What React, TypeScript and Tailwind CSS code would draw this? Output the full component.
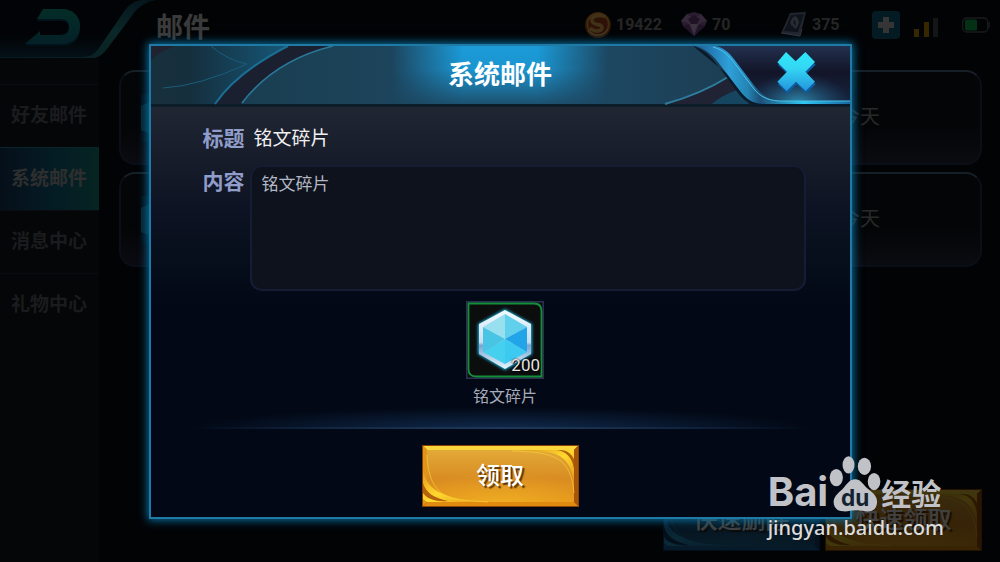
import React from 'react';

type Tone = 'gold' | 'blue';

interface ActionButtonProps {
  label: string;
  tone: Tone;
}

const tabs = ['好友邮件', '系统邮件', '消息中心', '礼物中心'];
const activeTab = '系统邮件';

// Bevel and fill colours of the big action buttons
const tones = {
  gold: { edge: '#8a4306', top: '#fbd53c', left: '#e0951a', right: '#a85508', bottom: '#e08a10', from: '#e2aa38', mid: '#d98c22', to: '#e8981c', swoosh: '#ffd92e', shade: '#b4620c' },
  blue: { edge: '#0a3a68', top: '#2f8fc0', left: '#1c6ea8', right: '#124a80', bottom: '#1a68a8', from: '#1d5c84', mid: '#184c74', to: '#1c6090', swoosh: '#2aa0d8', shade: '#0f3c66' },
};

const ActionButton: React.FC<ActionButtonProps> = ({ label, tone }) => {
  const c = tones[tone];
  return (
    <button type="button" className="relative h-[62px] w-[157px] pb-1 text-2xl font-medium text-white">
      <svg className="absolute inset-0 h-full w-full" viewBox="0 0 157 62" aria-hidden="true">
        <defs>
          <linearGradient id={`${tone}-fill`} x1="0" y1="0" x2="0" y2="1">
            <stop offset="0" stopColor={c.from} />
            <stop offset="0.55" stopColor={c.mid} />
            <stop offset="1" stopColor={c.to} />
          </linearGradient>
          <linearGradient id={`${tone}-swoosh`} x1="0" y1="0" x2="1" y2="1">
            <stop offset="0" stopColor={c.left} />
            <stop offset="0.5" stopColor={c.swoosh} />
            <stop offset="1" stopColor={c.left} />
          </linearGradient>
          <radialGradient id={`${tone}-warm`} cx="0.5" cy="1" r="0.6">
            <stop offset="0" stopColor={c.swoosh} stopOpacity="0.3" />
            <stop offset="1" stopColor={c.swoosh} stopOpacity="0" />
          </radialGradient>
        </defs>
        <rect width="157" height="62" fill={c.edge} />
        <path d="M1 1H156L152 5H5Z" fill={c.top} />
        <path d="M1 1L5 5V57L1 61Z" fill={c.left} />
        <path d="M156 1V61L152 57V5Z" fill={c.right} />
        <path d="M1 61L5 57H152L156 61Z" fill={c.bottom} />
        <rect x="5" y="5" width="147" height="52" fill={`url(#${tone}-fill)`} />
        <rect x="5" y="5" width="147" height="52" fill={`url(#${tone}-warm)`} />
        <path d="M1 24C4 42 14 53 62 57H5L1 54Z" fill={`url(#${tone}-swoosh)`} />
        <path d="M1 38C4 48 12 53 26 56C14 57 5 54 1 48Z" fill={c.shade} />
        <path d="M5 57V53C9 55 14 56 20 57Z" fill={c.swoosh} />
        <path d="M5 10C6 32 12 52 38 55L66 57" fill="none" stroke={c.top} strokeWidth="0.6" />
        <path d="M96 5H152V38C150 22 144 9 124 7Z" fill={`url(#${tone}-swoosh)`} />
        <path d="M134 5C144 6 150 12 152 24V14C149 8 144 5 138 5Z" fill={c.shade} />
        <path d="M90 6C132 7 149 12 152 48" fill="none" stroke={c.top} strokeWidth="0.6" />
      </svg>
      <span className="relative [text-shadow:2px_2px_1px_rgba(60,30,0,0.8)]">{label}</span>
    </button>
  );
};

const BackFrame = () => (
  <svg className="h-full w-full" viewBox="0 0 156 60" aria-hidden="true">
    <defs>
      <linearGradient id="frame" x1="0" y1="1" x2="1" y2="0">
        <stop offset="0" stopColor="#1c6a86" />
        <stop offset="0.6" stopColor="#2c9c9c" />
        <stop offset="1" stopColor="#144c6c" />
      </linearGradient>
      <linearGradient id="frame-glow" x1="0" y1="0" x2="0" y2="1">
        <stop offset="0.6" stopColor="#0a0e18" />
        <stop offset="1" stopColor="#124258" />
      </linearGradient>
      <linearGradient id="arrow" x1="0" y1="0" x2="0" y2="1">
        <stop offset="0" stopColor="#12b49c" />
        <stop offset="1" stopColor="#10809c" />
      </linearGradient>
    </defs>
    <path d="M0 0H148C138 2 131 7 124 18L103 47C98 54 94 57 84 57H0Z" fill="url(#frame-glow)" />
    <path d="M0 57H80C90 57 94 55 99 48L121 16C127 6 133 1 142 0H156C144 2 137 8 131 17L107 49C101 57 95 59 86 59H0Z" fill="url(#frame)" />
    <path d="M43 11H62C74 11 80 19 80 28C80 39 73 46 62 46H25L40 33V37H60C66 37 69 34 69 29C69 23 66 21 60 21H37Z" fill="#0a4a70" />
    <path d="M43 9H62C74 9 80 17 80 26C80 37 73 44 62 44H25L40 31V35H60C66 35 69 32 69 27C69 21 66 19 60 19H37Z" fill="url(#arrow)" />
  </svg>
);

const CoinIcon = () => (
  <svg className="h-7 w-7 shrink-0" viewBox="0 0 28 28" aria-hidden="true">
    <circle cx="14" cy="14" r="13" fill="#b85a14" />
    <circle cx="14" cy="13" r="11.5" fill="#ffb040" />
    <circle cx="14" cy="13.5" r="9.8" fill="#b84820" />
    <path d="M21 6C16 3 7 5 8 10C9 15 19 12 18 17C17 21 10 21 6 17" fill="none" stroke="#ffc860" strokeWidth="3.4" />
    <path d="M4 19C8 26 20 26 24 18" fill="none" stroke="#ffd880" strokeWidth="1.4" />
  </svg>
);

const GemIcon = () => (
  <svg className="h-7 w-7 shrink-0" viewBox="0 0 28 28" aria-hidden="true">
    <path d="M7 3L14 1L21 3L27 10L25 15L14 25L3 15L1 10Z" fill="#a070b8" />
    <path d="M7 3L14 8L21 3L27 10L20 12L14 25L8 12L1 10Z" fill="#d0a4e4" />
    <path d="M8 8L14 4L20 8L17 13H11Z" fill="#7c4c94" />
    <path d="M3 15L9 13L14 25Z" fill="#804c9c" />
    <path d="M25 15L19 13L14 25Z" fill="#804c9c" />
    <path d="M11 13H17L14 22Z" fill="#ecd0ff" />
  </svg>
);

const CardIcon = () => (
  <svg className="h-7 w-8 shrink-0" viewBox="0 0 32 28" aria-hidden="true">
    <path d="M14 2L30 1L24 25L5 22L7 18Z" fill="#8494b4" />
    <path d="M15 4L28 3L22 21L8 20Z" fill="#3c4c6c" />
    <path d="M19 5C24 8 24 14 19 18L17 15C13 14 14 8 19 5Z" fill="#a0b0cc" />
    <path d="M19 8L20 15L17 12Z" fill="#3c4c6c" />
    <path d="M5 22L24 25L26 18" fill="none" stroke="#c4d0e4" strokeWidth="1" />
  </svg>
);

const SignalIcon = () => (
  <svg className="h-6 w-7" viewBox="0 0 28 24" aria-hidden="true">
    <rect x="2" y="16" width="5" height="8" fill="#d89c00" />
    <rect x="12" y="9" width="5" height="15" fill="#d89c00" />
    <rect x="21" y="5" width="5" height="19" fill="#50545c" />
  </svg>
);

const BatteryIcon = () => (
  <svg className="h-4 w-7" viewBox="0 0 28 16" aria-hidden="true">
    <rect x="0.7" y="1" width="25" height="14" rx="4" fill="none" stroke="#646a70" strokeWidth="1.3" />
    <rect x="3" y="2.500" width="12" height="11" rx="1.500" fill="#10c058" />
    <path d="M27 5V11" stroke="#646a70" strokeWidth="1.5" />
  </svg>
);

const Currency: React.FC<{ icon: React.ReactNode; amount: string }> = ({ icon, amount }) => (
  <div className="flex w-24 items-center gap-1 font-[Roboto,sans-serif] text-base font-bold text-[#949494]">
    {icon}
    <span>{amount}</span>
  </div>
);

const MailCard = () => (
  <li className="relative flex h-[95px] items-center justify-between overflow-hidden rounded-2xl border-2 border-[#28385a] border-t-[#5a7c98] bg-linear-to-b from-[#12161c] from-60% to-[#2c2e46] pr-[100px] pl-5">
    <svg className="h-12 w-12" viewBox="0 0 48 48" aria-hidden="true">
      <rect width="48" height="48" fill="#0c3a54" />
      <path d="M0 12L24 0L10 24L20 44L0 36Z" fill="#1890b8" />
    </svg>
    <span className="pb-1 text-xl text-[#a0a0a0]">今天</span>
  </li>
);

// Painted strip behind the dialog title
const HeaderArt = () => (
  <svg className="absolute inset-0 h-full w-full" viewBox="0 0 699 61" preserveAspectRatio="none" aria-hidden="true">
    <defs>
      <linearGradient id="wing">
        <stop offset="0" stopColor="#18303c" />
        <stop offset="0.3" stopColor="#152f3e" />
        <stop offset="1" stopColor="#165878" />
      </linearGradient>
      <linearGradient id="panel">
        <stop offset="0" stopColor="#1a3e50" />
        <stop offset="0.4" stopColor="#1d4660" />
        <stop offset="0.75" stopColor="#1d4660" />
        <stop offset="1" stopColor="#1c3c50" />
      </linearGradient>
      <linearGradient id="lamp">
        <stop offset="0" stopColor="#1b9bd8" stopOpacity="0" />
        <stop offset="0.33" stopColor="#1b9bd8" />
        <stop offset="0.67" stopColor="#1b9bd8" />
        <stop offset="1" stopColor="#1b9bd8" stopOpacity="0" />
      </linearGradient>
      <linearGradient id="lamp-fade" x1="0" y1="0" x2="0" y2="1">
        <stop offset="0" stopColor="#fff" />
        <stop offset="0.4" stopColor="#eee" />
        <stop offset="1" stopColor="#222" />
      </linearGradient>
      <mask id="lamp-mask">
        <rect x="240" width="218" height="58" fill="url(#lamp-fade)" />
      </mask>
      <linearGradient id="corner" x1="0" y1="0" x2="0" y2="1">
        <stop offset="0" stopColor="#22304f" />
        <stop offset="0.45" stopColor="#131528" />
        <stop offset="1" stopColor="#162440" />
      </linearGradient>
      <radialGradient id="corner-glow" cx="0.5" cy="1" r="0.5" gradientTransform="translate(0 -0.6) scale(1 1.6)">
        <stop offset="0" stopColor="#3cc8f0" stopOpacity="0.6" />
        <stop offset="1" stopColor="#2a80b0" stopOpacity="0" />
      </radialGradient>
      <linearGradient id="ribbon" x1="0" y1="0" x2="1" y2="0">
        <stop offset="0" stopColor="#1c5c98" />
        <stop offset="0.22" stopColor="#2ea0d8" />
        <stop offset="0.34" stopColor="#2484b4" />
        <stop offset="0.42" stopColor="#1c5078" />
        <stop offset="0.7" stopColor="#30c8f4" />
        <stop offset="1" stopColor="#1864a0" />
      </linearGradient>
    </defs>
    <rect width="699" height="61" fill="#0c1d28" />
    <rect width="699" height="58" fill="#1b2030" />
    <path d="M0 0H137Q86 26 63 58H0Z" fill="url(#wing)" />
    <path d="M0 0H24Q8 6 0 14Z" fill="#20222f" />
    <path d="M60 0Q76 14 96 18Q48 40 12 42" fill="none" stroke="#1a5c7a" strokeWidth="1" />
    <path d="M137 0Q86 26 64 58" fill="none" stroke="#1a6e94" strokeWidth="2" />
    <path d="M182 0H560L598 58H90Q124 14 182 0Z" fill="url(#panel)" />
    <path d="M182 0Q124 14 91 57" fill="none" stroke="#2a7898" strokeWidth="1.6" />
    <rect x="240" width="218" height="58" fill="url(#lamp)" mask="url(#lamp-mask)" />
    <path d="M515 58Q552 48 578 31L586 44Q570 50 561 58Z" fill="#1f2334" />
    <path d="M561 58Q570 50 586 44L598 58Z" fill="#164560" />
    <path d="M514 58Q550 48 577 31" fill="none" stroke="#2c7e9c" strokeWidth="2" />
    <path d="M542 0C555 3 563 14 571 25L587 47C594 56 601 60 614 60H699V57H612Z" fill="#0a1a2c" />
    <path d="M555 0H699V57H612Q600 52 590 38Z" fill="url(#corner)" />
    <rect x="595" y="20" width="104" height="36" fill="url(#corner-glow)" />
    <path d="M544 0C557 3 565 13 573 24L589 45C596 54 602 58 615 58H699V55H628C618 55 610 48 602 38L583 13C577 5 571 1 564 0Z" fill="url(#ribbon)" />
    <path d="M562 1C573 4 578 10 584 18L603 43C609 50 615 54 628 55H699" fill="none" stroke="#48c4e8" strokeWidth="1" />
  </svg>
);

const CloseIcon = () => (
  <svg className="h-11 w-10" viewBox="48 27 120 132" aria-hidden="true">
    <defs>
      <linearGradient id="cross" x1="0" y1="0" x2="0" y2="1">
        <stop offset="0" stopColor="#2ee6fa" />
        <stop offset="0.4" stopColor="#34d8f4" />
        <stop offset="1" stopColor="#2494dc" />
      </linearGradient>
    </defs>
    <path transform="translate(2 8)" d="M78 33L107 61L136 33L165 63L136 92L165 122L137 150L108 122L80 150L52 122L81 92L52 64Z" fill="#0c5ca0" />
    <path d="M78 33L107 61L136 33L165 63L136 92L165 122L137 150L108 122L80 150L52 122L81 92L52 64Z" fill="url(#cross)" />
  </svg>
);

const ShardIcon = () => (
  <svg className="absolute inset-0 h-full w-full" viewBox="0 0 78 78" aria-hidden="true">
    <defs>
      <linearGradient id="rim" x1="0" y1="0" x2="0" y2="1">
        <stop offset="0" stopColor="#f4fcff" />
        <stop offset="0.55" stopColor="#c8dcf0" />
        <stop offset="0.6" stopColor="#7ca4d0" />
        <stop offset="1" stopColor="#e8f8ff" />
      </linearGradient>
      <filter id="halo" x="-30%" y="-30%" width="160%" height="160%">
        <feGaussianBlur stdDeviation="1.6" />
      </filter>
    </defs>
    <rect width="78" height="78" fill="#2a3050" />
    <rect x="1.500" y="1.500" width="75" height="75" fill="#0c0e0e" />
    <path d="M2.500 2.500H68Q75.500 2.500 75.500 10V75.500H10Q2.500 75.500 2.500 68Z" fill="none" stroke="#14903c" strokeWidth="1.8" />
    <path d="M39 8L66 23V53L39 69L12 53V23Z" fill="#18b8e0" filter="url(#halo)" />
    <path d="M39 9L65 23V53L39 68L13 53V23Z" fill="url(#rim)" />
    <path d="M39 13V38L17 26Z" fill="#98e0f0" />
    <path d="M39 13V38L61 26Z" fill="#60d0ec" />
    <path d="M61 26V51L39 38Z" fill="#22a4e8" />
    <path d="M61 51L39 63V38Z" fill="#3ccaf0" />
    <path d="M39 63L17 51L39 38Z" fill="#44d0ee" />
    <path d="M17 51V26L39 38Z" fill="#48c4e4" />
  </svg>
);

const PawLogo = () => (
  <svg className="h-[57px] w-[53px]" viewBox="0 0 160 172" role="img" aria-label="du">
    <g fill="#c0c2c8">
      <ellipse cx="25" cy="68" rx="20" ry="26" />
      <ellipse cx="62" cy="30" rx="18" ry="26" />
      <ellipse cx="110" cy="34" rx="20" ry="26" />
      <ellipse cx="139" cy="80" rx="19" ry="26" />
      <path d="M82 73C98 73 104 86 116 98C130 110 150 122 148 144C146 168 128 172 112 170C100 168 92 167 82 167C70 167 60 171 46 170C28 170 16 158 17 140C18 122 36 112 48 98C58 86 66 73 82 73Z" />
    </g>
    <text x="82" y="154" textAnchor="middle" fontSize="68" fontWeight="700" fontFamily="Inter, sans-serif" fill="#142230">du</text>
  </svg>
);

const Watermark = () => (
  <div className="pointer-events-none absolute right-14 bottom-[18px] flex flex-col text-[#c0c2c8]">
    <div className="flex h-[57px] items-end">
      <span className="font-[Inter,sans-serif] text-[40px] leading-10 font-bold">Bai</span>
      <PawLogo />
      <span className="pb-1 text-3xl leading-8 font-bold">经验</span>
    </div>
    <span className="font-['Noto_Sans',sans-serif] text-xl leading-8 font-medium text-[#dcdcdc]">jingyan.baidu.com</span>
  </div>
);

const MailDialog = () => (
  <section
    role="dialog"
    aria-labelledby="dialog-title"
    className="w-[70.300%] border-2 border-[#1f7aa6] bg-[#020815] shadow-[0_0_9px_1px_#0878ac]"
  >
    <header className="relative h-[61px]">
      <HeaderArt />
      <h2 id="dialog-title" className="relative text-center text-[26px] leading-[54px] font-bold text-white">系统邮件</h2>
      <button type="button" aria-label="关闭" className="absolute top-1 right-[34px]">
        <CloseIcon />
      </button>
    </header>
    <div className="bg-linear-to-b from-[#212633] via-[#0d1322] via-25% to-[#020815] to-50% pb-[10px]">
      <div className="grid grid-cols-[47px_1fr] gap-y-[14px] pt-4 pr-11 pl-[52px]">
        <span className="text-[21px] leading-7 font-bold text-[#909cca]">标题</span>
        <span className="pl-1 text-[19px] leading-7 text-[#f0f0f0]">铭文碎片</span>
        <label htmlFor="mail-body" className="text-[21px] leading-[30px] font-bold text-[#909cca]">内容</label>
        <textarea
          id="mail-body"
          readOnly
          value="铭文碎片"
          className="h-[126px] w-full resize-none rounded-xl border-2 border-[#151c34] bg-[#0d121d] px-[10px] py-0.5 text-[17px] leading-7 text-[#b4b8c4] outline-none"
        />
      </div>
      <div className="flex flex-col items-center pt-[10px] pl-[10px]">
        <div className="relative h-[78px] w-[78px]">
          <ShardIcon />
          <span className="absolute right-1 bottom-1 font-[Roboto,sans-serif] text-[17px] leading-5 text-[#e4e4e4] [text-shadow:0_0_2px_#000,1px_1px_1px_#000]">200</span>
        </div>
        <span className="mt-1 text-base leading-6 text-[#a8acba]">铭文碎片</span>
      </div>
      <div className="mx-9 h-[22px] bg-[radial-gradient(ellipse_50%_100%_at_50%_100%,#102a4c,transparent)]">
        <div className="h-full border-b-2 border-[#1d3858] mask-x-from-50% mask-x-to-100%" />
      </div>
      <div className="mt-4 flex justify-center">
        <ActionButton label="领取" tone="gold" />
      </div>
    </div>
  </section>
);

const App: React.FC = () => (
  <div className="relative flex min-h-screen flex-col overflow-hidden bg-[#080f16] font-['Noto_Sans_CJK_SC',sans-serif]">
    <header className="flex h-[58px] items-start">
      <button type="button" aria-label="返回" className="h-[60px] w-[156px] shrink-0">
        <BackFrame />
      </button>
      <h1 className="text-[27px] leading-[52px] font-bold text-[#e8e8e8]">邮件</h1>
      <div className="ml-auto flex h-[50px] items-center pr-[10px]">
        <Currency icon={<CoinIcon />} amount="19422" />
        <Currency icon={<GemIcon />} amount="70" />
        <Currency icon={<CardIcon />} amount="375" />
        <button type="button" aria-label="充值" className="mr-3 flex h-7 w-7 items-center justify-center rounded-sm bg-[#106c90]">
          <svg className="h-4 w-4" viewBox="0 0 16 16" aria-hidden="true">
            <path d="M5 0H11V5H16V11H11V16H5V11H0V5H5Z" fill="#d4d4d4" />
          </svg>
        </button>
        <div className="mr-[22px]">
          <SignalIcon />
        </div>
        <BatteryIcon />
      </div>
    </header>

    <div className="flex flex-1">
      <nav className="w-[99px] bg-[#14181e] pt-[26px]">
        {tabs.map((tab) => (
          <a
            key={tab}
            href="#"
            className={`block h-[63px] border-t pl-[11px] text-[19px] leading-[58px] font-bold whitespace-nowrap ${
              tab === activeTab
                ? 'border-[#2490ac] bg-linear-to-r from-[#143c64] via-[#126c90] to-[#1a9088] text-[#b8b8b8]'
                : 'border-[#2c3046] text-[#686c76]'
            }`}
          >
            {tab}
          </a>
        ))}
      </nav>
      <main className="flex flex-1 flex-col justify-between pt-3 pr-[18px] pb-[11px] pl-5">
        <ul className="flex flex-col gap-[7px]">
          <MailCard />
          <MailCard />
        </ul>
        <div className="flex justify-end gap-[5px]">
          <ActionButton label="快速删除" tone="blue" />
          <ActionButton label="快速领取" tone="gold" />
        </div>
      </main>
    </div>

    {/* Scrim with the open mail */}
    <div className="absolute inset-0 flex items-center justify-center bg-black/75">
      <MailDialog />
    </div>
    <Watermark />
  </div>
);

export default App;
